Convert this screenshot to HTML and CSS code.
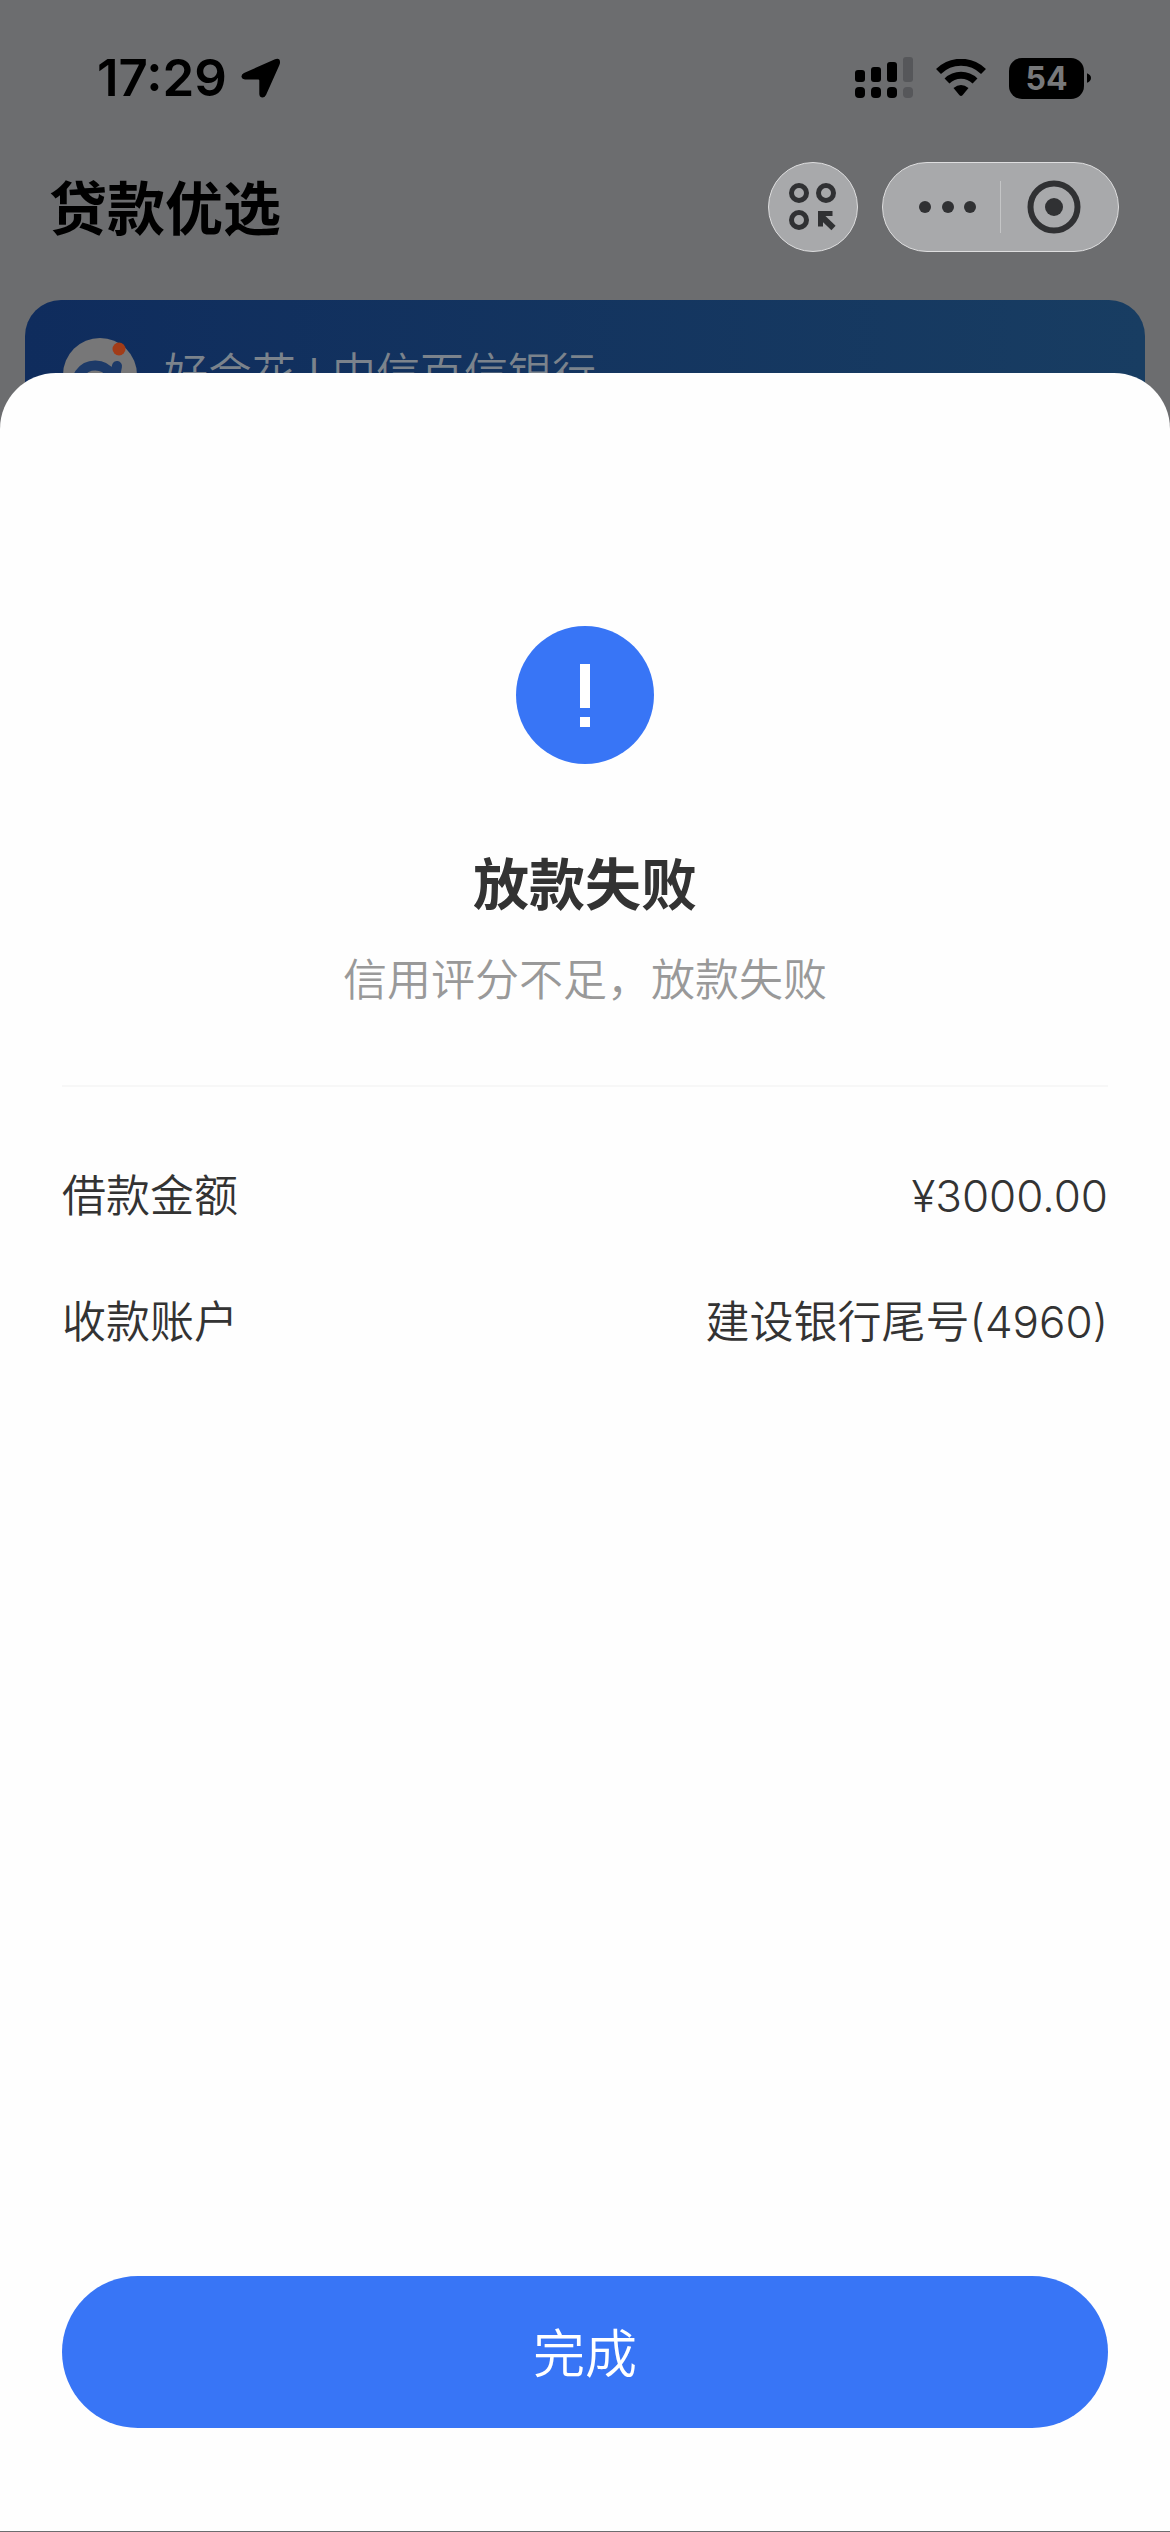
FILE: index.html
```html
<!DOCTYPE html>
<html lang="zh-CN">
<head>
<meta charset="utf-8">
<meta name="viewport" content="width=device-width, initial-scale=1">
<title>贷款优选</title>
<link rel="stylesheet" href="styles.css">
</head>
<body>
<div class="app">
  <div class="status-bar">
    <div class="status-left">
      <span class="time">17:29</span>
      <svg class="icon-location" viewBox="0 0 40 40" aria-hidden="true"><path d="M34 1.2 Q39.500 -0.500 39 5 Q38.800 6 38.300 7.200 L25 37 Q23.600 39.700 21 39.500 Q18.400 39 18.300 36 V22.500 Q18.300 21.500 17.300 21.500 H4 Q1 21.400 0.500 19 Q0.200 16.500 3 15 Z"/></svg>
    </div>
    <div class="status-right">
      <svg class="icon-signal" viewBox="0 0 58 42" aria-hidden="true">
        <rect x="0" y="13" width="10" height="12" rx="3"/><rect x="16" y="10" width="10" height="15" rx="3"/><rect x="32" y="5" width="10" height="20" rx="3"/><rect class="dim" x="48" y="0" width="10" height="25" rx="3"/>
        <rect x="0" y="30" width="10" height="11" rx="4"/><rect x="16" y="30" width="10" height="11" rx="4"/><rect x="32" y="30" width="10" height="11" rx="4"/><rect class="dim" x="48" y="30" width="10" height="11" rx="4"/>
      </svg>
      <svg class="icon-wifi" viewBox="0 0 50 38" aria-hidden="true">
        <path class="arc" d="M2.500 12.500 A32 32 0 0 1 47.500 12.500"/>
        <path class="arc" d="M11 22 A20 20 0 0 1 39 22"/>
        <path d="M17.500 29 Q25 23 32.500 29 L26.500 36.200 Q25 37.600 23.500 36.200 Z"/>
      </svg>
      <div class="battery"><span class="battery-level">54</span><svg class="battery-cap" viewBox="0 0 5 12" aria-hidden="true"><path d="M0 0 Q5 2 5 6 T0 12 Z"/></svg></div>
    </div>
  </div>
  <header class="nav">
    <h1 class="nav-title">贷款优选</h1>
    <div class="nav-actions">
      <button class="round-button" type="button" aria-label="小程序">
        <svg class="icon-apps" viewBox="0 0 48 48" aria-hidden="true">
          <circle cx="10" cy="10" r="7.500"/><circle cx="37" cy="10" r="7.500"/><circle cx="10" cy="37" r="7.500"/>
          <path class="arrow" d="M44.500 45 L31 32"/><path class="head" d="M29 28 H43.500 V33 H34 V43.500 H29 Z"/>
        </svg>
      </button>
      <div class="capsule">
        <button class="capsule-button" type="button" aria-label="更多">
          <svg class="icon-more" viewBox="0 0 58 12" aria-hidden="true"><circle cx="6" cy="6" r="6"/><circle cx="29" cy="6" r="6"/><circle cx="51" cy="6" r="6"/></svg>
        </button>
        <span class="capsule-line"></span>
        <button class="capsule-button" type="button" aria-label="关闭">
          <svg class="icon-target" viewBox="0 0 54 54" aria-hidden="true"><circle class="ring" cx="27" cy="27" r="23.500"/><circle cx="27" cy="27" r="9"/></svg>
        </button>
      </div>
    </div>
  </header>
  <section class="product">
    <svg class="product-logo" viewBox="0 0 75 75" aria-hidden="true">
      <circle class="disc" cx="37" cy="37" r="37"/>
      <path class="swirl" d="M54 28 L51 44 A19 19 0 1 1 48 36"/>
      <circle class="spot" cx="56" cy="11" r="6.500"/>
    </svg>
    <span class="product-name">好会花 | 中信百信银行</span>
  </section>
  <main class="sheet" role="dialog" aria-labelledby="result-title">
    <svg class="result-icon" viewBox="0 0 138 138" aria-hidden="true"><circle cx="69" cy="69" r="69"/><path d="M64 38h10v44H64z M64 91h10v10H64z"/></svg>
    <h2 class="result-title" id="result-title">放款失败</h2>
    <p class="result-reason">信用评分不足，放款失败</p>
    <dl class="details">
      <div class="detail"><dt>借款金额</dt><dd>¥3000.00</dd></div>
      <div class="detail"><dt>收款账户</dt><dd>建设银行尾号(4960)</dd></div>
    </dl>
    <button class="done" type="button">完成</button>
  </main>
</div>
</body>
</html>
```
FILE: styles.css
```css
* { box-sizing: border-box; }

body {
  margin: 0;
  background: #6c6d6f;
  color: #333;
  font-family: Inter, "Noto Sans CJK SC", sans-serif;
}

h1, h2, p, dl, dd { margin: 0; }

button {
  padding: 0;
  border: 0;
  background: none;
  font: inherit;
  cursor: pointer;
}

svg { display: block; flex: none; }

.app {
  display: flex;
  flex-direction: column;
  min-height: 100vh;
  padding-bottom: 1px;
}

/* Status bar */
.status-bar {
  display: flex;
  justify-content: space-between;
  align-items: center;
  height: 156px;
  padding: 0 79px 0 97px;
  color: #000;
}

.status-left { display: flex; align-items: center; gap: 14px; }
.status-right { display: flex; align-items: center; gap: 23px; }

.time { font-size: 51px; line-height: 60px; font-weight: 600; }

.icon-location { width: 40px; height: 40px; }
.icon-signal { width: 58px; height: 42px; }
.icon-signal .dim { fill: #56575a; }
.icon-wifi { width: 50px; height: 38px; }
.icon-wifi .arc { fill: none; stroke: #000; stroke-width: 7; }

.battery { display: flex; align-items: center; gap: 3px; }
.battery-cap { width: 4px; height: 12px; }

.battery-level {
  width: 75px;
  border-radius: 13px;
  background: #000;
  color: #77787a;
  font-size: 32px;
  line-height: 41px;
  font-weight: 700;
  text-align: center;
}

/* Navigation */
.nav {
  display: flex;
  justify-content: space-between;
  align-items: center;
  height: 102px;
  padding: 0 51px 0 49px;
}

.nav-title {
  padding-top: 3px;
  color: #000;
  font-size: 58px;
  line-height: 80px;
  font-weight: 700;
}

.nav-actions { display: flex; gap: 24px; }

.round-button,
.capsule {
  display: flex;
  align-items: center;
  justify-content: center;
  height: 90px;
  border: 1px solid #dededf;
  border-radius: 45px;
  background: #a8a9ab;
}

.round-button { width: 90px; }
.capsule { width: 237px; padding: 0 12px; }
.capsule-button { display: flex; flex: 1; justify-content: center; }
.capsule-line { width: 1px; height: 52px; background: #c4c5c6; }

.icon-apps { width: 48px; height: 48px; fill: none; stroke: #303133; stroke-width: 5; }
.icon-apps .arrow { stroke-width: 6; }
.icon-apps .head { fill: #303133; stroke: none; }
.icon-more { width: 58px; height: 12px; fill: #303133; }
.icon-target { width: 54px; height: 54px; fill: #303133; }
.icon-target .ring { fill: none; stroke: #303133; stroke-width: 6; }

/* Product card under the sheet */
.product {
  display: flex;
  align-items: center;
  gap: 26px;
  height: 150px;
  margin: 42px 25px 0;
  padding: 0 38px;
  border-radius: 36px;
  background: linear-gradient(90deg, #0f2c5d, #183d62);
}

.product-logo { width: 75px; height: 75px; }
.product-logo .disc { fill: #777778; }
.product-logo .swirl { fill: none; stroke: #1d3a68; stroke-width: 10; stroke-linecap: round; }
.product-logo .spot { fill: #a23c18; }

.product-name {
  color: #7b838c;
  font-family: "Liberation Sans", "Noto Sans CJK SC", sans-serif;
  font-size: 44px;
  font-weight: 350;
  line-height: 60px;
}

/* Result sheet */
.sheet {
  position: relative;
  display: flex;
  flex: 1;
  flex-direction: column;
  align-items: center;
  margin-top: -77px;
  padding: 253px 62px 103px;
  border-radius: 56px 56px 0 0;
  background: #fefefe;
}

.result-icon { width: 138px; height: 138px; fill: #3875f6; }
.result-icon path { fill: #fff; }

.result-title {
  margin-top: 81px;
  font-size: 56px;
  line-height: 80px;
  font-weight: 700;
}

.result-reason {
  margin-top: 25px;
  color: #999;
  font-size: 44px;
  font-weight: 350;
  line-height: 60px;
}

.details {
  display: flex;
  flex-direction: column;
  gap: 66px;
  width: 100%;
  margin-top: 75px;
  padding-top: 79px;
  border-top: 2px solid #f7f7f7;
}

.detail {
  display: flex;
  justify-content: space-between;
  font-size: 44px;
  font-weight: 350;
  line-height: 60px;
}

.done {
  width: 100%;
  height: 152px;
  margin-top: auto;
  padding-bottom: 4px;
  border-radius: 76px;
  background: #3875f6;
  color: #fff;
  font-size: 52px;
  font-weight: 350;
}
```
